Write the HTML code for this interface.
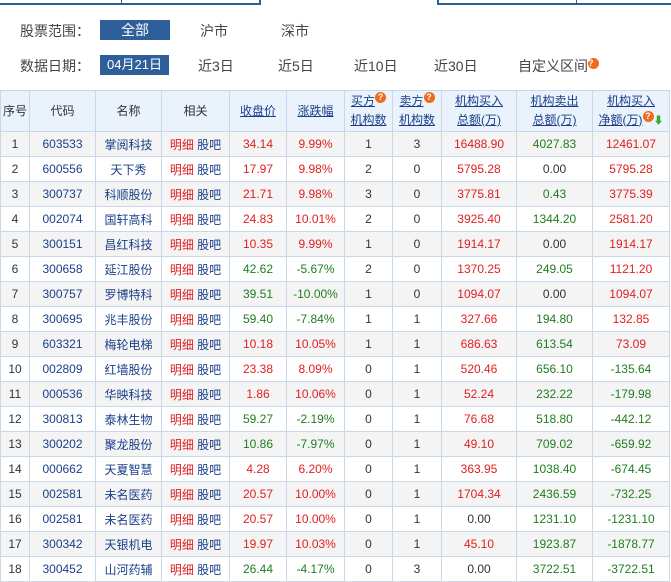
<!DOCTYPE html>
<html><head><meta charset="utf-8"><style>
body{margin:0;width:671px;height:581px;overflow:hidden;background:#fff;font-family:"Liberation Sans","Noto Sans CJK SC",sans-serif;font-size:12px;color:#333;position:relative}
.a{position:absolute}
.btn{background:#2e5f9a;color:#fff;text-align:center}
table{position:absolute;left:0;top:90px;border-collapse:collapse;table-layout:fixed;width:669px}
td,th{border:1px solid #c8d8ea;text-align:center;padding:0;white-space:nowrap;overflow:hidden}
th{background:#eaf2fb;font-weight:normal;height:40px;color:#333;line-height:19px}
th u{color:#1a3f8a}
td{height:24px}
tr:nth-child(even) td{background:#f4f4f4}
.c{color:#1a3f8a}.r{color:#e02020}.g{color:#1e7e1e}
.q{display:inline-block;width:11px;height:11px;border-radius:50%;background:#f06a1a;color:#fff;font-size:9px;line-height:11px;font-weight:bold;vertical-align:top;text-decoration:none}
</style></head><body>
<div class="a" style="left:0;top:0;width:259px;height:3px;border:solid #2e5f9a;border-width:0 2px 2px 0"></div>
<div class="a" style="left:121px;top:0;width:1px;height:4px;background:#2e5f9a"></div>
<div class="a" style="left:437px;top:0;width:234px;height:3px;border:solid #2e5f9a;border-width:0 0 2px 2px"></div>
<div class="a" style="left:576px;top:0;width:1px;height:4px;background:#2e5f9a"></div>
<div class="a" style="left:20px;top:21px;font-size:14px;color:#444">股票范围：</div>
<div class="a btn" style="left:100px;top:20px;width:70px;height:20px;line-height:20px;font-size:14px">全部</div>
<div class="a" style="left:200px;top:21px;font-size:14px;color:#444">沪市</div>
<div class="a" style="left:281px;top:21px;font-size:14px;color:#444">深市</div>
<div class="a" style="left:20px;top:56px;font-size:14px;color:#444">数据日期：</div>
<div class="a btn" style="left:100px;top:55px;width:69px;height:20px;line-height:20px;font-size:13px">04月21日</div>
<div class="a" style="left:198px;top:56px;font-size:14px;color:#444">近3日</div>
<div class="a" style="left:278px;top:56px;font-size:14px;color:#444">近5日</div>
<div class="a" style="left:354px;top:56px;font-size:14px;color:#444">近10日</div>
<div class="a" style="left:434px;top:56px;font-size:14px;color:#444">近30日</div>
<div class="a" style="left:518px;top:56px;font-size:14px;color:#444">自定义区间<span class="q" style="margin-top:2px">?</span></div>
<table>
<colgroup><col style="width:29px"><col style="width:66px"><col style="width:66px"><col style="width:68px"><col style="width:57px"><col style="width:58px"><col style="width:48px"><col style="width:49px"><col style="width:75px"><col style="width:76px"><col style="width:77px"></colgroup>
<tr><th>序号</th><th>代码</th><th>名称</th><th>相关</th><th><u>收盘价</u></th><th><u>涨跌幅</u></th><th><u>买方</u><span class="q">?</span><br><u>机构数</u></th><th><u>卖方</u><span class="q">?</span><br><u>机构数</u></th><th><u>机构买入</u><br><u>总额(万)</u></th><th><u>机构卖出</u><br><u>总额(万)</u></th><th><u>机构买入</u><br><u>净额(万)</u><span class="q">?</span><span style="color:#3a3;font-size:10px">⬇</span></th></tr>
<tr><td>1</td><td class="c">603533</td><td class="c">掌阅科技</td><td><span class="r">明细</span> <span class="c">股吧</span></td><td class="r">34.14</td><td class="r">9.99%</td><td>1</td><td>3</td><td class="r">16488.90</td><td class="g">4027.83</td><td class="r">12461.07</td></tr>
<tr><td>2</td><td class="c">600556</td><td class="c">天下秀</td><td><span class="r">明细</span> <span class="c">股吧</span></td><td class="r">17.97</td><td class="r">9.98%</td><td>2</td><td>0</td><td class="r">5795.28</td><td>0.00</td><td class="r">5795.28</td></tr>
<tr><td>3</td><td class="c">300737</td><td class="c">科顺股份</td><td><span class="r">明细</span> <span class="c">股吧</span></td><td class="r">21.71</td><td class="r">9.98%</td><td>3</td><td>0</td><td class="r">3775.81</td><td class="g">0.43</td><td class="r">3775.39</td></tr>
<tr><td>4</td><td class="c">002074</td><td class="c">国轩高科</td><td><span class="r">明细</span> <span class="c">股吧</span></td><td class="r">24.83</td><td class="r">10.01%</td><td>2</td><td>0</td><td class="r">3925.40</td><td class="g">1344.20</td><td class="r">2581.20</td></tr>
<tr><td>5</td><td class="c">300151</td><td class="c">昌红科技</td><td><span class="r">明细</span> <span class="c">股吧</span></td><td class="r">10.35</td><td class="r">9.99%</td><td>1</td><td>0</td><td class="r">1914.17</td><td>0.00</td><td class="r">1914.17</td></tr>
<tr><td>6</td><td class="c">300658</td><td class="c">延江股份</td><td><span class="r">明细</span> <span class="c">股吧</span></td><td class="g">42.62</td><td class="g">-5.67%</td><td>2</td><td>0</td><td class="r">1370.25</td><td class="g">249.05</td><td class="r">1121.20</td></tr>
<tr><td>7</td><td class="c">300757</td><td class="c">罗博特科</td><td><span class="r">明细</span> <span class="c">股吧</span></td><td class="g">39.51</td><td class="g">-10.00%</td><td>1</td><td>0</td><td class="r">1094.07</td><td>0.00</td><td class="r">1094.07</td></tr>
<tr><td>8</td><td class="c">300695</td><td class="c">兆丰股份</td><td><span class="r">明细</span> <span class="c">股吧</span></td><td class="g">59.40</td><td class="g">-7.84%</td><td>1</td><td>1</td><td class="r">327.66</td><td class="g">194.80</td><td class="r">132.85</td></tr>
<tr><td>9</td><td class="c">603321</td><td class="c">梅轮电梯</td><td><span class="r">明细</span> <span class="c">股吧</span></td><td class="r">10.18</td><td class="r">10.05%</td><td>1</td><td>1</td><td class="r">686.63</td><td class="g">613.54</td><td class="r">73.09</td></tr>
<tr><td>10</td><td class="c">002809</td><td class="c">红墙股份</td><td><span class="r">明细</span> <span class="c">股吧</span></td><td class="r">23.38</td><td class="r">8.09%</td><td>0</td><td>1</td><td class="r">520.46</td><td class="g">656.10</td><td class="g">-135.64</td></tr>
<tr><td>11</td><td class="c">000536</td><td class="c">华映科技</td><td><span class="r">明细</span> <span class="c">股吧</span></td><td class="r">1.86</td><td class="r">10.06%</td><td>0</td><td>1</td><td class="r">52.24</td><td class="g">232.22</td><td class="g">-179.98</td></tr>
<tr><td>12</td><td class="c">300813</td><td class="c">泰林生物</td><td><span class="r">明细</span> <span class="c">股吧</span></td><td class="g">59.27</td><td class="g">-2.19%</td><td>0</td><td>1</td><td class="r">76.68</td><td class="g">518.80</td><td class="g">-442.12</td></tr>
<tr><td>13</td><td class="c">300202</td><td class="c">聚龙股份</td><td><span class="r">明细</span> <span class="c">股吧</span></td><td class="g">10.86</td><td class="g">-7.97%</td><td>0</td><td>1</td><td class="r">49.10</td><td class="g">709.02</td><td class="g">-659.92</td></tr>
<tr><td>14</td><td class="c">000662</td><td class="c">天夏智慧</td><td><span class="r">明细</span> <span class="c">股吧</span></td><td class="r">4.28</td><td class="r">6.20%</td><td>0</td><td>1</td><td class="r">363.95</td><td class="g">1038.40</td><td class="g">-674.45</td></tr>
<tr><td>15</td><td class="c">002581</td><td class="c">未名医药</td><td><span class="r">明细</span> <span class="c">股吧</span></td><td class="r">20.57</td><td class="r">10.00%</td><td>0</td><td>1</td><td class="r">1704.34</td><td class="g">2436.59</td><td class="g">-732.25</td></tr>
<tr><td>16</td><td class="c">002581</td><td class="c">未名医药</td><td><span class="r">明细</span> <span class="c">股吧</span></td><td class="r">20.57</td><td class="r">10.00%</td><td>0</td><td>1</td><td>0.00</td><td class="g">1231.10</td><td class="g">-1231.10</td></tr>
<tr><td>17</td><td class="c">300342</td><td class="c">天银机电</td><td><span class="r">明细</span> <span class="c">股吧</span></td><td class="r">19.97</td><td class="r">10.03%</td><td>0</td><td>1</td><td class="r">45.10</td><td class="g">1923.87</td><td class="g">-1878.77</td></tr>
<tr><td>18</td><td class="c">300452</td><td class="c">山河药辅</td><td><span class="r">明细</span> <span class="c">股吧</span></td><td class="g">26.44</td><td class="g">-4.17%</td><td>0</td><td>3</td><td>0.00</td><td class="g">3722.51</td><td class="g">-3722.51</td></tr>
</table>
</body></html>
